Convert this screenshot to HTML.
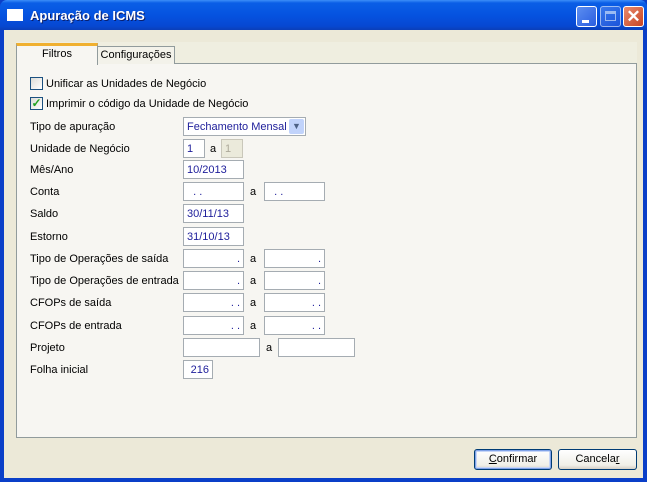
<!DOCTYPE html>
<html><head><meta charset="utf-8"><style>
*{margin:0;padding:0;box-sizing:border-box}
body{width:647px;height:482px;overflow:hidden;background:#0a3fc8;font-family:"Liberation Sans",sans-serif;font-size:11px;color:#000;position:relative}
.tb{position:absolute;left:0;top:0;width:647px;height:30px;background:linear-gradient(#3d8ef8 0,#0a5ee6 3px,#0553e0 15px,#0648d2 26px,#0a3fb8 30px);border-radius:7px 7px 0 0}
.title{position:absolute;left:30px;top:8px;color:#fff;font-weight:bold;font-size:13px;text-shadow:1px 1px #0a1e6a}
.ico{position:absolute;left:7px;top:9px;width:16px;height:12px;background:#fff;border-top:2px solid #fff}
.wb{position:absolute;top:6px;width:21px;height:21px;border:1px solid #fff;border-radius:3px;background:linear-gradient(135deg,#5c8ef0,#2a5ee0)}
.client{position:absolute;left:4px;top:30px;width:639px;height:448px;background:#ece9d8}
.strip{position:absolute;left:12px;top:12px;width:621px;height:22px;background:#efeee0}
.panel{position:absolute;left:12px;top:33px;width:621px;height:375px;background:#f7f6f2;border:1px solid #919b9c}
.tab{position:absolute;background:#f7f6f2;border:1px solid #919b9c;border-bottom:none;text-align:center}
.l{position:absolute;left:26px}
.in{position:absolute;height:19px;background:#fff;border:1px solid #a5acb2;color:#1d1d9a;padding:3px 3px 0;line-height:13px}
.a{position:absolute}
.btn{position:absolute;top:419px;height:21px;border:1px solid #003c74;border-radius:3px;background:linear-gradient(#fff,#f0efe8 80%,#d6d0c5);text-align:center;line-height:19px;font-size:11px}
.cb{position:absolute;left:26px;width:13px;height:13px;border:1px solid #1c5180;background:linear-gradient(135deg,#dcdcd7,#fff)}
</style></head><body>
<div class="tb"><div class="ico"></div><div class="title">Apuração de ICMS</div>
<div class="wb" style="left:576px"><div style="position:absolute;left:5px;top:13px;width:7px;height:3px;background:#fff"></div></div>
<div class="wb" style="left:600px;opacity:.6"><div style="position:absolute;left:4px;top:4px;width:11px;height:10px;border:1px solid #fff;border-top-width:3px"></div></div>
<div class="wb" style="left:623px;background:linear-gradient(135deg,#e88a6c,#c94524);color:#fff;font-size:17px;font-weight:bold;text-align:center;line-height:19px">✕</div>
</div>
<div class="client">
<div class="strip"></div>
<div class="panel"></div>
<div class="tab" style="left:93px;top:16px;width:78px;height:18px;line-height:16px;background:#f3f2ea">Configurações</div>
<div class="tab" style="left:12px;top:13px;width:82px;height:22px;border-top:3px solid #f0b030;line-height:16px">Filtros</div>
<div class="cb" style="top:47px"></div><div class="a" style="left:42px;top:48px">Unificar as Unidades de Negócio</div>
<div class="cb" style="top:67px;color:#21a121;font-size:12px;line-height:10px;text-align:center;font-weight:bold">✓</div><div class="a" style="left:42px;top:68px">Imprimir o código da Unidade de Negócio</div>
<div class="l" style="top:91px">Tipo de apuração</div>
<div class="in" style="left:179px;top:87px;width:123px;padding-left:3px">Fechamento Mensal<div style="position:absolute;right:1px;top:1px;width:15px;height:15px;background:#c1d3fb;border-radius:2px;color:#4d6185;font-size:9px;text-align:center;line-height:15px">▼</div></div>
<div class="l" style="top:113px">Unidade de Negócio</div>
<div class="in" style="left:179px;top:109px;width:22px">1</div><div class="a" style="left:206px;top:113px">a</div>
<div class="in" style="left:217px;top:109px;width:22px;background:#ebeadb;color:#aca899;border-color:#c9c7ba">1</div>
<div class="l" style="top:134px">Mês/Ano</div><div class="in" style="left:179px;top:130px;width:61px">10/2013</div>
<div class="l" style="top:156px">Conta</div><div class="in" style="left:179px;top:152px;width:61px">&nbsp;&nbsp;. .</div><div class="a" style="left:246px;top:156px">a</div><div class="in" style="left:260px;top:152px;width:61px">&nbsp;&nbsp;. .</div>
<div class="l" style="top:178px">Saldo</div><div class="in" style="left:179px;top:174px;width:61px">30/11/13</div>
<div class="l" style="top:201px">Estorno</div><div class="in" style="left:179px;top:197px;width:61px">31/10/13</div>
<div class="l" style="top:223px">Tipo de Operações de saída</div><div class="in" style="left:179px;top:219px;width:61px;text-align:right">.</div><div class="a" style="left:246px;top:223px">a</div><div class="in" style="left:260px;top:219px;width:61px;text-align:right">.</div>
<div class="l" style="top:245px">Tipo de Operações de entrada</div><div class="in" style="left:179px;top:241px;width:61px;text-align:right">.</div><div class="a" style="left:246px;top:245px">a</div><div class="in" style="left:260px;top:241px;width:61px;text-align:right">.</div>
<div class="l" style="top:267px">CFOPs de saída</div><div class="in" style="left:179px;top:263px;width:61px;text-align:right">. .</div><div class="a" style="left:246px;top:267px">a</div><div class="in" style="left:260px;top:263px;width:61px;text-align:right">. .</div>
<div class="l" style="top:290px">CFOPs de entrada</div><div class="in" style="left:179px;top:286px;width:61px;text-align:right">. .</div><div class="a" style="left:246px;top:290px">a</div><div class="in" style="left:260px;top:286px;width:61px;text-align:right">. .</div>
<div class="l" style="top:312px">Projeto</div><div class="in" style="left:179px;top:308px;width:77px"></div><div class="a" style="left:262px;top:312px">a</div><div class="in" style="left:274px;top:308px;width:77px"></div>
<div class="l" style="top:334px">Folha inicial</div><div class="in" style="left:179px;top:330px;width:30px;text-align:right">216</div>
<div class="btn" style="left:470px;width:78px;border-color:#003c74;box-shadow:inset 0 0 0 1px #7fa2e8,inset 0 0 0 2px #c7d6f6"><u>C</u>onfirmar</div>
<div class="btn" style="left:554px;width:79px">Cancela<u>r</u></div>
</div>
</body></html>
